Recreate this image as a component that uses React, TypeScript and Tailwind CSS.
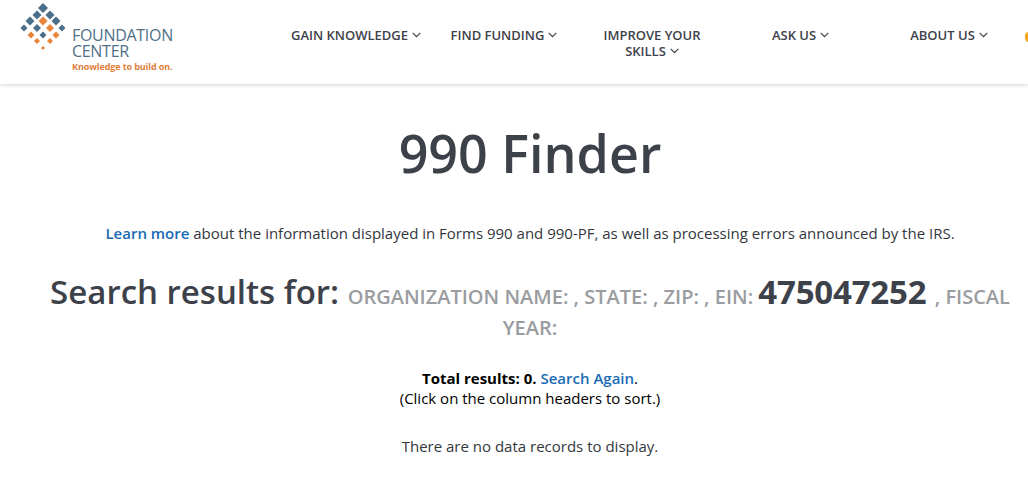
const NAV_ITEMS = [
  { lines: ["GAIN KNOWLEDGE"], width: "w-[148px]" },
  { lines: ["FIND FUNDING"], width: "w-[148px]" },
  { lines: ["IMPROVE YOUR", "SKILLS"], width: "w-[148px]" },
  { lines: ["ASK US"], width: "w-[149px]" },
  { lines: ["ABOUT US"], width: "w-[148px]" },
];

const BLUE = "#4a6f8a";
const ORANGE = "#e8853a";

// logo diamonds: x, y, half size, colour
const DIAMONDS: [number, number, number, string][] = [
  [43, 8, 5, BLUE],
  [37, 15, 4.5, BLUE],
  [50, 15, 4.5, BLUE],
  [30, 21, 4.5, BLUE],
  [43, 21, 4.5, ORANGE],
  [56, 21, 4.5, BLUE],
  [24, 28, 3.5, BLUE],
  [37, 28, 4, BLUE],
  [50, 28, 4, ORANGE],
  [62, 28, 3.5, BLUE],
  [31, 35, 3.5, ORANGE],
  [43, 35, 3.5, BLUE],
  [56, 35, 3.5, ORANGE],
  [37, 41, 3, ORANGE],
  [50, 41, 3, ORANGE],
  [43, 48, 2, ORANGE],
];

function Logo() {
  return (
    <div className="flex w-[282px] shrink-0 h-full">
      <svg width="70" height="56" viewBox="0 0 70 56" className="shrink-0">
        {DIAMONDS.map(([x, y, r, c], i) => (
          <polygon key={i} points={`${x},${y - r} ${x + r},${y} ${x},${y + r} ${x - r},${y}`} fill={c} />
        ))}
      </svg>
      <div className="ml-[2px] pt-[27px]">
        <div className="text-[16px] leading-[16px] tracking-[-0.3px] text-[#4f7088]">
          FOUNDATION
          <br />
          CENTER
        </div>
        <div className="text-[9px] leading-[12px] mt-[2px] font-bold text-[#e0803a] tracking-[-0.1px]">
          Knowledge to build on.
        </div>
      </div>
    </div>
  );
}

function Chevron() {
  return (
    <svg width="9" height="6" viewBox="0 0 9 6" className="inline-block ml-[4px] align-[2px]">
      <polyline points="0.7,0.8 4.5,4.6 8.3,0.8" fill="none" stroke="#3d4149" strokeWidth="1.2" />
    </svg>
  );
}

function Header() {
  return (
    <header className="h-[84px] bg-white shadow-[0_1px_4px_rgba(0,0,0,0.18)] flex relative">
      <Logo />
      <nav className="flex pt-[27px] shrink-0">
        {NAV_ITEMS.map((item) => (
          <div
            key={item.lines[0]}
            className={`${item.width} text-center text-[13px] leading-[16px] font-semibold text-[#3d4149]`}
          >
            {item.lines.map((line, i) => (
              <div key={line}>
                {line}
                {i === item.lines.length - 1 && <Chevron />}
              </div>
            ))}
          </div>
        ))}
      </nav>
      <div className="absolute left-[1025px] top-[32px] w-[8px] h-[10px] rounded-full bg-[#f5a623]" />
    </header>
  );
}

export default function App() {
  return (
    <div className="w-[1028px] h-[490px] overflow-hidden bg-white font-['Open_Sans',sans-serif] text-[#3d4149]">
      <Header />
      <main className="pl-8 text-center">
        <h1 className="text-[52px] leading-[60px] font-semibold mt-[39px]">990 Finder</h1>
        <p className="text-[15px] leading-[20px] mt-[40px] text-[#33373d]">
          <a className="text-[#1a6bb5] font-semibold">Learn more</a> about the information displayed in Forms 990 and
          990-PF, as well as processing errors announced by the IRS.
        </p>
        <h2 className="text-[33px] leading-[31px] font-semibold mt-[33px]">
          Search results for:{" "}
          <span className="text-[20px] leading-[20px] text-[#9a9ca0]">
            ORGANIZATION NAME: , STATE: , ZIP: , EIN:{" "}
            <span className="text-[33px] leading-[31px] font-bold text-[#3d4149] tracking-[-0.2px]">475047252 </span>,
            FISCAL YEAR:
          </span>
        </h2>
        <div className="text-[15px] leading-[20px] mt-[30px] text-black">
          <p>
            <b className="font-bold">Total results: 0.</b>{" "}
            <a className="text-[#1a6bb5] font-semibold">Search Again</a>.
          </p>
          <p>(Click on the column headers to sort.)</p>
        </div>
        <p className="text-[15px] leading-[20px] mt-[28px] text-[#33373d]">There are no data records to display.</p>
      </main>
    </div>
  );
}
